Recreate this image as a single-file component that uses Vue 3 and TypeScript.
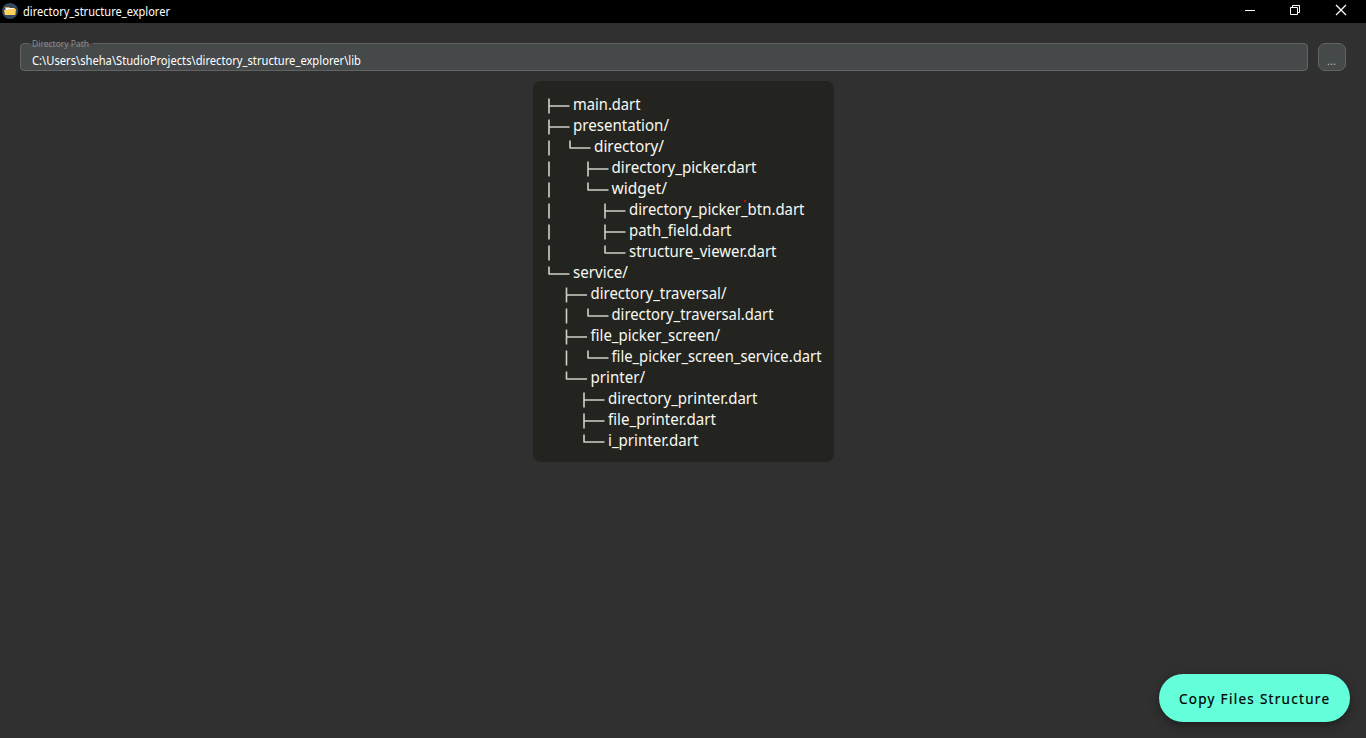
<script setup lang="ts">
interface Row {
  name: string
  stem: number
  x: number
  end: number
  last?: boolean
  bars?: number[]
}

const rows: Row[] = [
  { name: 'main.dart', stem: 4, x: 28, end: 95.5 },
  { name: 'presentation/', stem: 4, x: 28, end: 124 },
  { name: 'directory/', stem: 25, x: 49, end: 119, last: true, bars: [4] },
  { name: 'directory_picker.dart', stem: 43, x: 66.5, end: 211.5, bars: [4] },
  { name: 'widget/', stem: 43, x: 66.5, end: 122, last: true, bars: [4] },
  { name: 'directory_picker_btn.dart', stem: 60, x: 84, end: 259.5, bars: [4] },
  { name: 'path_field.dart', stem: 60, x: 84, end: 186.5, bars: [4] },
  { name: 'structure_viewer.dart', stem: 60, x: 84, end: 231.5, last: true, bars: [4] },
  { name: 'service/', stem: 4, x: 28, end: 83, last: true },
  { name: 'directory_traversal/', stem: 21.5, x: 45.5, end: 181.5 },
  { name: 'directory_traversal.dart', stem: 43, x: 66.5, end: 228.5, last: true, bars: [21.5] },
  { name: 'file_picker_screen/', stem: 21.5, x: 45.5, end: 175 },
  { name: 'file_picker_screen_service.dart', stem: 43, x: 66.5, end: 276.5, last: true, bars: [21.5] },
  { name: 'printer/', stem: 21.5, x: 45.5, end: 100, last: true },
  { name: 'directory_printer.dart', stem: 39, x: 63, end: 212.5 },
  { name: 'file_printer.dart', stem: 39, x: 63, end: 171 },
  { name: 'i_printer.dart', stem: 39, x: 63, end: 153.5, last: true },
]

function guides(r: Row): string {
  const bars = (r.bars ?? []).map((b) => `M${b} 5.5V20.5`).join('')
  return `${bars}M${r.stem} 5.5V${r.last ? 13.5 : 20.5}M${r.stem} 13H${r.stem + 20.5}`
}
</script>

<template>
  <div class="window">
    <header class="titlebar">
      <svg class="logo" width="16" height="16" viewBox="0 0 16 16">
        <circle cx="8" cy="8" r="8" fill="#34495e" />
        <path d="M3 4h4l1 1h5v2H3z" fill="#e8a33d" />
        <path d="M4 5h8v3H4z" fill="#fff" />
        <path d="M2 7h4l1-1h7l-.7 6H2.8z" fill="#ffd05b" />
      </svg>
      <svg class="title" width="160" height="23">
        <text x="0" y="16" textLength="147" lengthAdjust="spacingAndGlyphs">directory_structure_explorer</text>
      </svg>
      <div class="controls">
        <svg width="46" height="22" viewBox="0 0 46 22"><path d="M17 10.5h10" /></svg>
        <svg width="46" height="22" viewBox="0 0 46 22"><path d="M16.500 7.500h7v7h-7zM18.500 7.500v-2h7v7h-2" /></svg>
        <svg width="46" height="22" viewBox="0 0 46 22"><path class="close" d="M16 5l10 10M26 5l-10 10" /></svg>
      </div>
    </header>

    <div class="toolbar">
      <div class="field">
        <label class="caption">
          <svg width="62" height="14"><text x="3" y="9" textLength="57" lengthAdjust="spacingAndGlyphs">Directory Path</text></svg>
        </label>
        <svg class="value" width="340" height="20">
          <text x="0" y="14" textLength="329" lengthAdjust="spacingAndGlyphs">C:\Users\sheha\StudioProjects\directory_structure_explorer\lib</text>
        </svg>
      </div>
      <button class="browse">...</button>
    </div>

    <main class="panel">
      <svg v-for="(r, i) in rows" :key="i" class="row" width="277" height="21">
        <path :d="guides(r)" />
        <text :x="r.x" y="17" :textLength="r.end - r.x" lengthAdjust="spacingAndGlyphs">{{ r.name }}</text>
      </svg>
      <i class="marker"></i>
    </main>

    <button class="copy">
      <svg width="152" height="24">
        <text x="0" y="17" textLength="150">Copy Files Structure</text>
      </svg>
    </button>
  </div>
</template>

<style>
body { background: #303030; overflow: hidden; }
</style>

<style scoped>
.window {
  position: relative;
  box-sizing: border-box;
  height: 738px;
  background: #303030;
  display: flex;
  flex-direction: column;
  font-family: "Noto Sans", "Open Sans", sans-serif;
}
svg { display: block; overflow: visible; flex: none; }
.titlebar {
  height: 23px;
  background: #000;
  display: flex;
  align-items: flex-start;
}
.logo { margin: 3px 5px 0 2px; }
.title text { font-size: 12px; fill: #fff; }
.controls { margin-left: auto; display: flex; }
.controls path { fill: none; stroke: #fff; stroke-width: 1; }
.controls .close { stroke-width: 1.300; }
.toolbar {
  display: flex;
  gap: 10px;
  padding: 20px 20px 10px;
}
.field {
  position: relative;
  box-sizing: border-box;
  flex: 1;
  height: 28px;
  border: 1px solid #626464;
  border-radius: 4px;
  background: #454949;
  padding: 7px 0 0 11px;
}
.caption {
  position: absolute;
  left: 8px;
  top: -6px;
}
.caption::before {
  content: "";
  position: absolute;
  left: 0;
  top: 5px;
  width: 64px;
  height: 1px;
  background: #3b3d3d;
}
.caption svg { position: relative; }
.caption text { font-size: 9px; fill: #8b8d8d; }
.value text { font-size: 12px; fill: #fff; }
.browse {
  box-sizing: border-box;
  width: 28px;
  height: 28px;
  border: 1px solid #626464;
  border-radius: 7px;
  background: #454949;
  color: #b9bbbb;
  font: 11px/16px "Noto Sans", sans-serif;
  padding: 8px 1px 0 0;
}
.panel {
  position: relative;
  align-self: center;
  width: 277px;
  padding: 12px;
  border-radius: 8px;
  background: #23241f;
}
.row path { fill: none; stroke: #d0d0ca; stroke-width: 1.600; }
.row text { font-size: 16px; fill: #f8f8f2; }
.marker {
  position: absolute;
  left: 211px;
  top: 119px;
  width: 2px;
  height: 2px;
  border-radius: 1px;
  background: #f00;
}
.copy {
  position: absolute;
  right: 16px;
  bottom: 16px;
  width: 191px;
  height: 48px;
  border: 0;
  border-radius: 24px;
  background: #64ffda;
  padding: 2px 0 0 20px;
  box-shadow: 0 3px 5px -1px rgba(0, 0, 0, .2), 0 5px 10px rgba(0, 0, 0, .14), 0 1px 14px rgba(0, 0, 0, .1);
}
.copy text { font: 400 13.500px "Noto Sans", sans-serif; fill: #000; stroke: #000; stroke-width: .2px; }
</style>
